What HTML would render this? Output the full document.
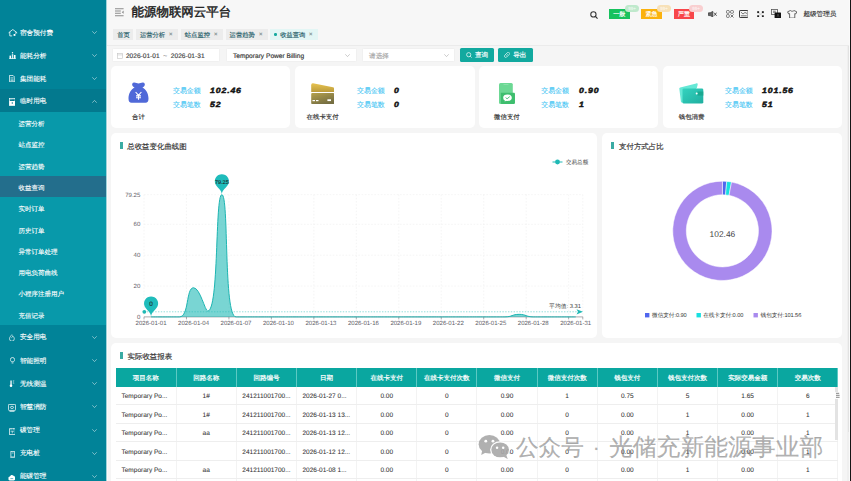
<!DOCTYPE html>
<html><head><meta charset="utf-8">
<style>
*{box-sizing:border-box;margin:0;padding:0}
html,body{width:851px;height:481px;overflow:hidden;background:#f5f5f5;font-family:"Liberation Sans",sans-serif;position:relative;-webkit-text-stroke-width:0.16px;text-rendering:geometricPrecision}
.abs{position:absolute}
#side{position:absolute;left:0;top:0;width:106px;height:481px;background:#018398}
.mi{position:absolute;left:0;width:106px;height:23px;color:#fff;font-weight:500;-webkit-text-stroke-width:0.13px;font-size:6.6px;line-height:24px}
.mi .t{position:absolute;left:20px;top:0.9px}
.mi .ic{position:absolute;left:8.5px;top:7.5px;width:9px;height:9px}
.mi .ch{position:absolute;left:92px;top:10.5px;width:5px;height:3px}
.si{position:absolute;left:0;width:106px;height:21.3px;color:#fff;font-weight:500;-webkit-text-stroke-width:0.12px;font-size:6.5px;line-height:25.8px;padding-left:18.6px}
#hdr{position:absolute;left:107px;top:0;width:744px;height:46px;background:#f7f7f7}
.tab{position:absolute;top:28.7px;height:11.8px;background:#ececec;color:#28606a;font-size:6.3px;font-weight:500;line-height:13.7px;padding-left:4px}
.tab .x{position:absolute;right:5.5px;top:0;font-size:6px;color:#6a7a7e}
.card{position:absolute;background:#fff;border-radius:5px}
.lbl{position:absolute;color:#46c6f4;-webkit-text-stroke-width:0.1px;font-size:6.9px;font-weight:500;margin-top:1.1px}
.num{position:absolute;color:#111;font-size:7.5px;font-weight:bold;font-style:italic;letter-spacing:0.75px;transform:scaleX(1.16);transform-origin:0 0;-webkit-text-stroke:0.45px #111}
.cap{position:absolute;color:#333;font-size:6.4px;font-weight:500;text-align:center;width:40px}
.ttl{position:absolute;font-size:7.45px;font-weight:500;color:#333}
.bar{position:absolute;width:2.5px;height:7.3px;background:#3aaba3}
table{border-collapse:collapse;table-layout:fixed;position:absolute;left:116px;top:368px;width:722px}
th{background:#0aa7a0;color:#fff;font-size:6.5px;-webkit-text-stroke-width:0.2px;font-weight:500;height:18.5px;border-right:0.6px solid #5cc9c3;text-align:center;padding:2.4px 0 0 0;vertical-align:middle}
td{height:18.4px;-webkit-text-stroke-width:0.06px;font-size:6.5px;color:#333;text-align:center;border-bottom:0.6px solid #eeeeee;border-right:0.6px solid #f3f3f3;padding:2.3px 0 0 0;white-space:nowrap}
td.l{text-align:left;padding-left:5.5px}
.btn{position:absolute;top:48px;height:14.2px;background:#12a99f;color:#fff;font-size:6.6px;line-height:16.4px;border-radius:1.5px;-webkit-text-stroke-width:0.15px;padding-top:0}
.inp{position:absolute;top:48px;height:14px;background:#fff;border:0.5px solid #f0f0f0;border-radius:1.5px;font-size:6.6px;line-height:15.2px;color:#444}
</style></head><body>

<div id="side">
  <div class="mi" style="top:20.8px"><span class="t">宿舍预付费</span><svg class="ch" viewBox="0 0 5 3"><path d="M0.3 0.3 L2.5 2.6 L4.7 0.3" fill="none" stroke="#cfe6ea" stroke-width="0.6"/></svg></div>
  <div class="mi" style="top:43.9px"><span class="t">能耗分析</span><svg class="ch" viewBox="0 0 5 3"><path d="M0.3 0.3 L2.5 2.6 L4.7 0.3" fill="none" stroke="#cfe6ea" stroke-width="0.6"/></svg></div>
  <div class="mi" style="top:66.9px"><span class="t">集团能耗</span><svg class="ch" viewBox="0 0 5 3"><path d="M0.3 0.3 L2.5 2.6 L4.7 0.3" fill="none" stroke="#cfe6ea" stroke-width="0.6"/></svg></div>
  <div class="mi" style="top:89.3px;background:#03798e;height:22.7px"><span class="t">临时用电</span><svg class="ch" viewBox="0 0 5 3"><path d="M0.3 2.7 L2.5 0.4 L4.7 2.7" fill="none" stroke="#cfe6ea" stroke-width="0.6"/></svg></div>
  <div class="abs" style="left:0;top:112px;width:106px;height:213px;background:#0899aa"></div>
  <div class="si" style="top:112px">运营分析</div>
  <div class="si" style="top:133.3px">站点监控</div>
  <div class="si" style="top:154.6px">运营趋势</div>
  <div class="si" style="top:175.9px;background:#236e8c">收益查询</div>
  <div class="si" style="top:197.2px">实时订单</div>
  <div class="si" style="top:218.5px">历史订单</div>
  <div class="si" style="top:239.8px">异常订单处理</div>
  <div class="si" style="top:261.1px">用电负荷曲线</div>
  <div class="si" style="top:282.4px">小程序注册用户</div>
  <div class="si" style="top:303.7px">充值记录</div>
  <div class="mi" style="top:325.6px"><span class="t">安全用电</span><svg class="ch" viewBox="0 0 5 3"><path d="M0.3 0.3 L2.5 2.6 L4.7 0.3" fill="none" stroke="#cfe6ea" stroke-width="0.6"/></svg></div>
  <div class="mi" style="top:348.7px"><span class="t">智能照明</span><svg class="ch" viewBox="0 0 5 3"><path d="M0.3 0.3 L2.5 2.6 L4.7 0.3" fill="none" stroke="#cfe6ea" stroke-width="0.6"/></svg></div>
  <div class="mi" style="top:371.8px"><span class="t">无线测温</span><svg class="ch" viewBox="0 0 5 3"><path d="M0.3 0.3 L2.5 2.6 L4.7 0.3" fill="none" stroke="#cfe6ea" stroke-width="0.6"/></svg></div>
  <div class="mi" style="top:394.9px"><span class="t">智慧消防</span><svg class="ch" viewBox="0 0 5 3"><path d="M0.3 0.3 L2.5 2.6 L4.7 0.3" fill="none" stroke="#cfe6ea" stroke-width="0.6"/></svg></div>
  <div class="mi" style="top:418px"><span class="t">碳管理</span><svg class="ch" viewBox="0 0 5 3"><path d="M0.3 0.3 L2.5 2.6 L4.7 0.3" fill="none" stroke="#cfe6ea" stroke-width="0.6"/></svg></div>
  <div class="mi" style="top:441.1px"><span class="t">充电桩</span><svg class="ch" viewBox="0 0 5 3"><path d="M0.3 0.3 L2.5 2.6 L4.7 0.3" fill="none" stroke="#cfe6ea" stroke-width="0.6"/></svg></div>
  <div class="mi" style="top:464.2px"><span class="t">能碳管理</span><svg class="ch" viewBox="0 0 5 3"><path d="M0.3 0.3 L2.5 2.6 L4.7 0.3" fill="none" stroke="#cfe6ea" stroke-width="0.6"/></svg></div>
</div>
<!--SIDEICONS-->
<svg class="abs" style="left:8px;top:29px" width="10" height="7.5" viewBox="0 0 10 7.5"><path d="M0.6 3.8 L4.8 0.5 L9.2 3.8 M1.8 3 V6.9 H4.2 M7.9 3 V5" fill="none" stroke="#fff" stroke-width="0.8"/><rect x="5.6" y="5" width="1.8" height="1.9" fill="#fff"/></svg>
<svg class="abs" style="left:8.7px;top:52px" width="7" height="7" viewBox="0 0 7 7"><path d="M0.2 6.6 H6.8" stroke="#fff" stroke-width="0.8"/><rect x="0.5" y="3.6" width="1.5" height="3" fill="#fff"/><rect x="2.8" y="2.2" width="1.5" height="4.4" fill="#fff" fill-opacity="0.85"/><rect x="5" y="3" width="1.5" height="3.6" fill="#fff"/><circle cx="3.5" cy="0.8" r="0.7" fill="#fff"/></svg>
<svg class="abs" style="left:9px;top:75px" width="6.2" height="7.2" viewBox="0 0 6.2 7.2"><path d="M0.4 0.4 H4 L5.8 2.2 V6.8 H0.4 Z" fill="none" stroke="#fff" stroke-width="0.8"/><path d="M1.5 2.8 H4.7 M1.5 4.2 H4.7 M1.5 5.6 H4.7" stroke="#fff" stroke-width="0.6"/></svg>
<svg class="abs" style="left:9px;top:97.8px" width="6.4" height="7.8" viewBox="0 0 6.4 7.8"><rect x="0.35" y="0.35" width="5.7" height="7.1" fill="none" stroke="#fff" stroke-width="0.7"/><path d="M1.3 1.6 H5.1" stroke="#fff" stroke-width="0.6" stroke-dasharray="0.6 0.6"/><rect x="0.35" y="3" width="5.7" height="4.45" fill="#fff"/><circle cx="3.3" cy="5" r="0.7" fill="#03798e"/></svg>
<svg class="abs" style="left:9.4px;top:333.6px" width="5.8" height="7.5" viewBox="0 0 5.8 7.5"><path d="M2.9 0.5 C2 2 0.5 3 0.5 4.8 A2.4 2.4 0 0 0 5.3 4.8 C5.3 3.3 4.2 2.4 3.6 1.8 C3.6 3 3.2 3.4 2.6 3.6" fill="none" stroke="#fff" stroke-width="0.7"/></svg>
<svg class="abs" style="left:9.6px;top:357.3px" width="5" height="6.5" viewBox="0 0 5 6.5"><path d="M1.5 4.8 C0.8 4.2 0.4 3.4 0.4 2.6 A2.1 2.1 0 0 1 4.6 2.6 C4.6 3.4 4.2 4.2 3.5 4.8 Z" fill="none" stroke="#fff" stroke-width="0.75"/><path d="M1.6 6 H3.4" stroke="#fff" stroke-width="0.7"/></svg>
<svg class="abs" style="left:9.3px;top:380.4px" width="6" height="7.2" viewBox="0 0 6 7.2"><rect x="1.4" y="0.5" width="1.3" height="4.5" fill="#fff"/><circle cx="2" cy="5.7" r="1.3" fill="#fff"/><path d="M3.8 0.8 H5.3 M3.8 2 H5 M3.8 3.2 H5.3" stroke="#fff" stroke-width="0.5"/></svg>
<svg class="abs" style="left:8.2px;top:404px" width="8" height="8" viewBox="0 0 8 8"><rect x="0.4" y="0.4" width="7.2" height="6" rx="0.8" fill="none" stroke="#fff" stroke-width="0.8"/><ellipse cx="4" cy="3.4" rx="1.6" ry="1.1" fill="none" stroke="#fff" stroke-width="0.7"/><path d="M1.5 7.6 H6.5" stroke="#fff" stroke-width="0.7"/></svg>
<svg class="abs" style="left:8.9px;top:427.8px" width="6.6" height="6.8" viewBox="0 0 6.6 6.8"><rect x="0.4" y="0.8" width="5.8" height="5.6" fill="none" stroke="#fff" stroke-width="0.7"/><path d="M2 0.2 V1.5 M4.6 0.2 V1.5 M1.6 3.2 H5 M3.3 3.2 V5.4" stroke="#fff" stroke-width="0.6"/></svg>
<svg class="abs" style="left:9.5px;top:450.7px" width="5.4" height="7.2" viewBox="0 0 5.4 7.2"><rect x="0.9" y="0.4" width="3.6" height="5.6" fill="none" stroke="#fff" stroke-width="0.7"/><path d="M1.8 2 H3.6 M0.2 6.8 H5.2" stroke="#fff" stroke-width="0.6"/></svg>
<svg class="abs" style="left:8.2px;top:474px" width="7.6" height="7" viewBox="0 0 7.6 7"><path d="M1.8 6.6 C0.6 6.6 0.2 5.6 0.5 4.6 C0.2 3.4 1 2.4 2 2.6 C2.5 1 4.4 0.6 5.4 1.8 C6.8 2 7.4 3.4 7 4.6 C7.4 5.8 6.6 6.6 5.6 6.6 Z" fill="#fff"/><path d="M2.4 4.6 H5.2" stroke="#018398" stroke-width="0.6"/></svg>
<!--/SIDEICONS-->
<div class="abs" style="left:106px;top:0;width:1px;height:481px;background:#9fd3da"></div><div class="abs" style="left:107px;top:0;width:1px;height:481px;background:#fcf9f9"></div>

<!-- header -->
<div id="hdr"></div>
<div class="abs" style="left:107px;top:45px;width:744px;height:0.8px;background:#ebebeb"></div>
<svg class="abs" style="left:114.5px;top:8.3px" width="9" height="8.5" viewBox="0 0 9 8.5"><path d="M0 0.7 H8.6 M0 3 H5.8 M0 5.3 H5.8 M0 7.7 H8.6" stroke="#8c8c8c" stroke-width="1.1"/><path d="M8.6 2.6 L6.8 4.15 L8.6 5.7 Z" fill="#8c8c8c"/></svg>
<div class="abs" style="left:131.6px;top:4.2px;font-size:12.45px;font-weight:normal;color:#1e1e1e;line-height:16px;-webkit-text-stroke-width:0.45px">能源物联网云平台</div>

<!-- header right -->
<svg class="abs" style="left:589.5px;top:10.5px" width="8.5" height="8" viewBox="0 0 9 8.5"><circle cx="3.6" cy="3.6" r="2.8" fill="none" stroke="#333" stroke-width="1.1"/><path d="M5.6 5.6 L8 8" stroke="#333" stroke-width="1.2"/></svg>
<div class="abs" style="left:609px;top:8.7px;width:20.6px;height:10px;background:#17c25e;color:#fff;font-size:6px;line-height:12.2px;text-align:center">一般</div>
<div class="abs" style="left:625px;top:5.4px;width:14px;height:7px;background:#bfe9cc;border-radius:3.5px;color:rgba(255,255,255,0.55);font-size:4.5px;line-height:8.5px;text-align:center">99+</div>
<div class="abs" style="left:641px;top:8.7px;width:20.8px;height:10px;background:#fbb20e;color:#fff;font-size:6px;line-height:12.2px;text-align:center">紧急</div>
<div class="abs" style="left:657px;top:5.4px;width:14px;height:7px;background:#f7e1b8;border-radius:3.5px;color:rgba(255,255,255,0.55);font-size:4.5px;line-height:8.5px;text-align:center">99+</div>
<div class="abs" style="left:673.8px;top:8.7px;width:20.2px;height:10px;background:#f8464a;color:#fff;font-size:6px;line-height:12.2px;text-align:center">严重</div>
<div class="abs" style="left:689px;top:5.4px;width:14px;height:7px;background:#f9cfd0;border-radius:3.5px;color:rgba(255,255,255,0.55);font-size:4.5px;line-height:8.5px;text-align:center">99+</div>

<svg class="abs" style="left:707.6px;top:10.6px" width="9" height="6.4" viewBox="0 0 9 6.4"><path d="M0.5 1.8 H2.2 L4.8 0.4 V6 L2.2 4.6 H0.5 Z" fill="#666" stroke="#333" stroke-width="0.7" stroke-linejoin="round"/><path d="M6 1.6 L8.6 4.8 M8.6 1.6 L6 4.8" stroke="#333" stroke-width="0.8"/></svg>
<svg class="abs" style="left:725.8px;top:9.8px" width="8" height="8" viewBox="0 0 8 8"><rect x="0.5" y="0.5" width="2.8" height="2.8" rx="0.9" fill="none" stroke="#555" stroke-width="0.8"/><rect x="4.6" y="0.5" width="2.8" height="2.8" rx="0.9" fill="none" stroke="#555" stroke-width="0.8"/><rect x="0.5" y="4.6" width="2.8" height="2.8" rx="0.9" fill="none" stroke="#555" stroke-width="0.8"/><path d="M4.5 4.5 L7.5 7.5 M7.5 4.5 L4.5 7.5" stroke="#555" stroke-width="0.8"/></svg>
<svg class="abs" style="left:738.8px;top:9.8px" width="9.6" height="8" viewBox="0 0 9.6 8"><rect x="0.5" y="0.5" width="8.6" height="7" rx="0.6" fill="none" stroke="#3a3a3a" stroke-width="1"/><path d="M1.8 2 L4 4 L6 2.5 L8 3.5 M1.8 5.8 H7.8" fill="none" stroke="#555" stroke-width="0.8"/></svg>
<svg class="abs" style="left:756.5px;top:10.7px" width="7" height="6.4" viewBox="0 0 7 6.4"><rect x="0.2" y="0.2" width="1.9" height="1.9" fill="#222"/><rect x="4.9" y="0.2" width="1.9" height="1.9" fill="#222"/><rect x="0.2" y="4.3" width="1.9" height="1.9" fill="#222"/><rect x="4.9" y="4.3" width="1.9" height="1.9" fill="#222"/><path d="M2 2 L5 4.4 M5 2 L2 4.4" stroke="#aaa" stroke-width="0.4"/></svg>
<svg class="abs" style="left:771px;top:9px" width="10.4" height="9.4" viewBox="0 0 10.4 9.4"><rect x="0.4" y="0.4" width="6" height="5.2" fill="#f7f7f7" stroke="#555" stroke-width="0.8"/><rect x="2" y="1.6" width="2.8" height="2.4" fill="#999"/><rect x="3.6" y="3.6" width="6.4" height="5.6" rx="0.5" fill="#111"/><path d="M6 8 L7 5 L8 8" fill="none" stroke="#666" stroke-width="0.5"/></svg>
<svg class="abs" style="left:787px;top:9.6px" width="10.4" height="8.6" viewBox="0 0 10.4 8.6"><path d="M3.4 0.5 L0.6 1.8 L1.6 4 L2.6 3.6 V8.1 H7.8 V3.6 L8.8 4 L9.8 1.8 L7 0.5 C6.3 1.5 4.1 1.5 3.4 0.5 Z" fill="none" stroke="#444" stroke-width="0.8" stroke-linejoin="round"/></svg>
<div class="abs" style="left:803.4px;top:11px;font-size:6.6px;color:#333;font-weight:500;line-height:8px">超级管理员</div>
<div class="abs" style="left:846.5px;top:45.5px;width:3px;height:436px;background:#efefef"></div><div class="abs" style="left:847.6px;top:45.5px;width:1.6px;height:386px;background:#e2e2e2"></div><div class="abs" style="left:849px;top:0;width:1px;height:481px;background:#fafafa"></div><div class="abs" style="left:850px;top:0;width:1px;height:481px;background:#151515"></div>

<!-- tabs -->
<div class="tab" style="left:113.3px;width:20.2px">首页</div>
<div class="tab" style="left:135.9px;width:42.1px">运营分析<span class="x">×</span></div>
<div class="tab" style="left:180.8px;width:42.2px">站点监控<span class="x">×</span></div>
<div class="tab" style="left:225.6px;width:42.4px">运营趋势<span class="x">×</span></div>
<div class="tab" style="left:270.4px;width:47.6px;background:#e3f6f5;padding-left:9.8px">收益查询<span class="x">×</span><span class="abs" style="left:3.8px;top:4.8px;width:2.4px;height:2.4px;border-radius:50%;background:#17aaa0"></span></div>

<!-- filter -->
<div class="inp" style="left:111.6px;width:108.6px"><svg class="abs" style="left:4px;top:3.5px" width="6" height="6" viewBox="0 0 6 6"><rect x="0.4" y="0.6" width="5.2" height="5" fill="none" stroke="#c4c4c4" stroke-width="0.6"/><path d="M0.4 1.9 H5.6" stroke="#c4c4c4" stroke-width="0.6"/></svg><span class="abs" style="left:13.3px;top:0">2026-01-01 &nbsp;<span style="color:#888">~</span>&nbsp; 2026-01-31</span></div>
<div class="inp" style="left:226px;width:130.7px"><span class="abs" style="left:6px;top:0;color:#333">Temporary Power Billing</span><svg class="abs" style="left:118px;top:4.6px" width="5" height="3" viewBox="0 0 5 3"><path d="M0.3 0.3 L2.5 2.6 L4.7 0.3" fill="none" stroke="#aaa" stroke-width="0.6"/></svg></div>
<div class="inp" style="left:361.6px;width:93.4px;color:#aaa"><span class="abs" style="left:6.5px;top:0">请选择</span><svg class="abs" style="left:81px;top:4.6px" width="5" height="3" viewBox="0 0 5 3"><path d="M0.3 0.3 L2.5 2.6 L4.7 0.3" fill="none" stroke="#aaa" stroke-width="0.6"/></svg></div>
<div class="btn" style="left:460px;width:34px"><svg class="abs" style="left:6px;top:4px" width="6" height="6" viewBox="0 0 6 6"><circle cx="2.7" cy="2.7" r="2.1" fill="none" stroke="#fff" stroke-width="0.7"/><path d="M4.2 4.2 L5.6 5.6" stroke="#fff" stroke-width="0.7"/></svg><span class="abs" style="left:15px;top:0">查询</span></div>
<div class="btn" style="left:498px;width:34.5px"><svg class="abs" style="left:6.2px;top:4.3px" width="6" height="6" viewBox="0 0 6 6"><rect x="1.6" y="-0.2" width="2.6" height="6.2" rx="1.3" transform="rotate(45 3 3)" fill="none" stroke="#e8f6f5" stroke-width="0.7"/><path d="M2.3 3.7 L3.8 2.2" stroke="#e8f6f5" stroke-width="0.6"/></svg><span class="abs" style="left:15.2px;top:0">导出</span></div>

<!-- stat cards -->
<div class="card" style="left:110.7px;top:66.2px;width:179.3px;height:62.2px"></div>
<div class="card" style="left:295px;top:66.2px;width:179.5px;height:62.2px"></div>
<div class="card" style="left:479.1px;top:66.2px;width:179.4px;height:62.2px"></div>
<div class="card" style="left:663.3px;top:66.2px;width:179.2px;height:62.2px"></div>


<!-- card contents -->
<svg class="abs" style="left:128px;top:82.3px" width="21" height="21.2" viewBox="0 0 21 21.2"><path d="M6.2 0.6 C4.2 0.6 3.6 2.6 4.6 4 C5.2 4.8 6 5.2 6.6 5.6 C3 7.4 0.5 11.5 0.5 16.6 C0.5 19.5 1.5 20.8 3.5 20.8 H17.5 C19.5 20.8 20.5 19.5 20.5 16.6 C20.5 11.5 18 7.4 14.4 5.6 C15 5.2 15.8 4.8 16.4 4 C17.4 2.6 16.8 0.6 14.8 0.6 C13 0.6 12 1.6 10.5 1.6 C9 1.6 8 0.6 6.2 0.6 Z" fill="#5069d8"/><path d="M7.6 10 L10.5 13.4 L13.4 10 M10.5 13.4 V17.8 M8 13.9 H13 M8 15.7 H13" fill="none" stroke="#fff" stroke-width="1.1"/></svg>
<div class="cap" style="left:118.4px;top:113.2px">合计</div>
<svg class="abs" style="left:310.9px;top:82.8px" width="23.4" height="21.3" viewBox="0 0 23.4 21.3"><defs><linearGradient id="g1" x1="0" y1="0" x2="0" y2="1"><stop offset="0" stop-color="#e8c350"/><stop offset="1" stop-color="#bc9c3c"/></linearGradient><linearGradient id="g2" x1="0" y1="0" x2="0.6" y2="1"><stop offset="0" stop-color="#b5a14c"/><stop offset="1" stop-color="#756e42"/></linearGradient></defs><path d="M2 0.2 L22 4.3 C22.8 4.5 23.2 5.1 23.2 5.9 V8.9 H0.2 V2.2 C0.2 0.9 0.9 0 2 0.2 Z" fill="url(#g1)"/><rect x="0.2" y="9.9" width="23" height="11.2" rx="1" fill="url(#g2)"/><rect x="1.5" y="17" width="2.5" height="1.2" fill="#fff"/><rect x="5" y="17" width="2.5" height="1.2" fill="#fff"/><rect x="16.4" y="16.3" width="3.6" height="1.8" fill="#fff"/></svg>
<div class="cap" style="left:302.6px;top:113.2px">在线卡支付</div>
<svg class="abs" style="left:499px;top:82.5px" width="16.2" height="21.2" viewBox="0 0 16.2 21.2"><rect x="0" y="0" width="13.8" height="21" rx="1.5" fill="#6cd894"/><rect x="4.5" y="1.4" width="5" height="0.6" fill="#9fe8b9"/><path d="M1.8 9.8 H14.6 C15.5 9.8 16 10.3 16 11.2 V19.8 C16 20.6 15.5 21.1 14.6 21.1 H3 C2.2 21.1 1.8 20.6 1.8 19.8 Z" fill="#3ebe6e"/><ellipse cx="8.5" cy="14.7" rx="4.3" ry="3.3" fill="#fff"/><path d="M5.6 18.6 L6.4 16.8 L8 17.6 Z" fill="#fff"/><path d="M6.6 14.6 L8.1 15.8 L10.8 13.6" fill="none" stroke="#3ebe6e" stroke-width="0.9"/></svg>
<div class="cap" style="left:486.9px;top:113.2px">微信支付</div>
<svg class="abs" style="left:679.4px;top:83.3px" width="24.4" height="20.8" viewBox="0 0 24.4 20.8"><defs><linearGradient id="g4" x1="0" y1="0" x2="1" y2="1"><stop offset="0" stop-color="#34d3bf"/><stop offset="1" stop-color="#1fae9f"/></linearGradient></defs><path d="M1.2 4.4 L17.2 0.4 C18.4 0.1 19 0.9 18.6 1.9 L17.8 5 L3.2 19.8 C2.4 19.8 2 19.4 1.9 18.6 L0.3 5.6 C0.2 5 0.6 4.6 1.2 4.4 Z" fill="#66e8d6"/><rect x="3.5" y="5.4" width="20.8" height="15.2" rx="1.4" fill="url(#g4)"/><path d="M18.4 8.5 H24.3 V12.6 H18.4 Z" fill="#1aa890"/><circle cx="17.7" cy="10.5" r="1" fill="#fff"/></svg>
<div class="cap" style="left:671.6px;top:113.2px">钱包消费</div>

<div class="lbl" style="left:173px;top:86.2px">交易金额</div>
<div class="lbl" style="left:173px;top:100px">交易笔数</div>
<div class="num" style="left:210.2px;top:85.6px">102.46</div>
<div class="num" style="left:210.2px;top:99.5px">52</div>
<div class="lbl" style="left:357.1px;top:86.2px">交易金额</div>
<div class="lbl" style="left:357.1px;top:100px">交易笔数</div>
<div class="num" style="left:394.2px;top:85.6px">0</div>
<div class="num" style="left:394.2px;top:99.5px">0</div>
<div class="lbl" style="left:541.3px;top:86.2px">交易金额</div>
<div class="lbl" style="left:541.3px;top:100px">交易笔数</div>
<div class="num" style="left:579px;top:85.6px">0.90</div>
<div class="num" style="left:579px;top:99.5px">1</div>
<div class="lbl" style="left:725.1px;top:86.2px">交易金额</div>
<div class="lbl" style="left:725.1px;top:100px">交易笔数</div>
<div class="num" style="left:762.3px;top:85.6px">101.56</div>
<div class="num" style="left:762.3px;top:99.5px">51</div>

<!-- chart cards -->
<div class="card" style="left:110.7px;top:133.4px;width:486.5px;height:204.6px"></div>
<div class="card" style="left:601.7px;top:133.4px;width:240.7px;height:204.6px"></div>
<div class="bar" style="left:120.1px;top:142.1px"></div>
<div class="ttl" style="left:127.2px;top:141.8px">总收益变化曲线图</div>
<div class="bar" style="left:611.1px;top:141.9px"></div>
<div class="ttl" style="left:619px;top:141.6px">支付方式占比</div>

<!--CHART--><svg class="abs" style="left:110px;top:150px;-webkit-text-stroke-width:0.05px" width="490" height="190" viewBox="110 150 490 190" font-family="Liberation Sans, sans-serif"><line x1="144" y1="286.05" x2="582.8" y2="286.05" stroke="#eeeeee" stroke-width="0.6" stroke-dasharray="1.6 1.6"/><line x1="144" y1="255.20" x2="582.8" y2="255.20" stroke="#eeeeee" stroke-width="0.6" stroke-dasharray="1.6 1.6"/><line x1="144" y1="224.34" x2="582.8" y2="224.34" stroke="#eeeeee" stroke-width="0.6" stroke-dasharray="1.6 1.6"/><line x1="144" y1="194.65" x2="582.8" y2="194.65" stroke="#eeeeee" stroke-width="0.6" stroke-dasharray="1.6 1.6"/><line x1="144.00" y1="194.6" x2="144.00" y2="316.9" stroke="#eeeeee" stroke-width="0.6" stroke-dasharray="1.6 1.6"/><line x1="186.46" y1="194.6" x2="186.46" y2="316.9" stroke="#eeeeee" stroke-width="0.6" stroke-dasharray="1.6 1.6"/><line x1="228.93" y1="194.6" x2="228.93" y2="316.9" stroke="#eeeeee" stroke-width="0.6" stroke-dasharray="1.6 1.6"/><line x1="271.39" y1="194.6" x2="271.39" y2="316.9" stroke="#eeeeee" stroke-width="0.6" stroke-dasharray="1.6 1.6"/><line x1="313.86" y1="194.6" x2="313.86" y2="316.9" stroke="#eeeeee" stroke-width="0.6" stroke-dasharray="1.6 1.6"/><line x1="356.32" y1="194.6" x2="356.32" y2="316.9" stroke="#eeeeee" stroke-width="0.6" stroke-dasharray="1.6 1.6"/><line x1="398.79" y1="194.6" x2="398.79" y2="316.9" stroke="#eeeeee" stroke-width="0.6" stroke-dasharray="1.6 1.6"/><line x1="441.25" y1="194.6" x2="441.25" y2="316.9" stroke="#eeeeee" stroke-width="0.6" stroke-dasharray="1.6 1.6"/><line x1="483.72" y1="194.6" x2="483.72" y2="316.9" stroke="#eeeeee" stroke-width="0.6" stroke-dasharray="1.6 1.6"/><line x1="526.18" y1="194.6" x2="526.18" y2="316.9" stroke="#eeeeee" stroke-width="0.6" stroke-dasharray="1.6 1.6"/><line x1="568.65" y1="194.6" x2="568.65" y2="316.9" stroke="#eeeeee" stroke-width="0.6" stroke-dasharray="1.6 1.6"/><line x1="582.8" y1="194.6" x2="582.8" y2="316.9" stroke="#eeeeee" stroke-width="0.6" stroke-dasharray="1.6 1.6"/><line x1="144" y1="316.9" x2="582.8" y2="316.9" stroke="#6e7079" stroke-width="0.6"/><line x1="144.00" y1="316.9" x2="144.00" y2="319.4" stroke="#6e7079" stroke-width="0.6"/><line x1="186.46" y1="316.9" x2="186.46" y2="319.4" stroke="#6e7079" stroke-width="0.6"/><line x1="228.93" y1="316.9" x2="228.93" y2="319.4" stroke="#6e7079" stroke-width="0.6"/><line x1="271.39" y1="316.9" x2="271.39" y2="319.4" stroke="#6e7079" stroke-width="0.6"/><line x1="313.86" y1="316.9" x2="313.86" y2="319.4" stroke="#6e7079" stroke-width="0.6"/><line x1="356.32" y1="316.9" x2="356.32" y2="319.4" stroke="#6e7079" stroke-width="0.6"/><line x1="398.79" y1="316.9" x2="398.79" y2="319.4" stroke="#6e7079" stroke-width="0.6"/><line x1="441.25" y1="316.9" x2="441.25" y2="319.4" stroke="#6e7079" stroke-width="0.6"/><line x1="483.72" y1="316.9" x2="483.72" y2="319.4" stroke="#6e7079" stroke-width="0.6"/><line x1="526.18" y1="316.9" x2="526.18" y2="319.4" stroke="#6e7079" stroke-width="0.6"/><line x1="568.65" y1="316.9" x2="568.65" y2="319.4" stroke="#6e7079" stroke-width="0.6"/><line x1="582.8" y1="316.9" x2="582.8" y2="319.4" stroke="#6e7079" stroke-width="0.6"/><text x="140.4" y="319.00" text-anchor="end" font-size="6.1" fill="#5f6168">0</text><text x="140.4" y="288.15" text-anchor="end" font-size="6.1" fill="#5f6168">20</text><text x="140.4" y="257.30" text-anchor="end" font-size="6.1" fill="#5f6168">40</text><text x="140.4" y="226.44" text-anchor="end" font-size="6.1" fill="#5f6168">60</text><text x="140.4" y="196.75" text-anchor="end" font-size="6.1" fill="#5f6168">79.25</text><text x="151.08" y="325.20" text-anchor="middle" font-size="6.05" fill="#5f6168">2026-01-01</text><text x="193.54" y="325.20" text-anchor="middle" font-size="6.05" fill="#5f6168">2026-01-04</text><text x="236.01" y="325.20" text-anchor="middle" font-size="6.05" fill="#5f6168">2026-01-07</text><text x="278.47" y="325.20" text-anchor="middle" font-size="6.05" fill="#5f6168">2026-01-10</text><text x="320.94" y="325.20" text-anchor="middle" font-size="6.05" fill="#5f6168">2026-01-13</text><text x="363.40" y="325.20" text-anchor="middle" font-size="6.05" fill="#5f6168">2026-01-16</text><text x="405.86" y="325.20" text-anchor="middle" font-size="6.05" fill="#5f6168">2026-01-19</text><text x="448.33" y="325.20" text-anchor="middle" font-size="6.05" fill="#5f6168">2026-01-22</text><text x="490.79" y="325.20" text-anchor="middle" font-size="6.05" fill="#5f6168">2026-01-25</text><text x="533.26" y="325.20" text-anchor="middle" font-size="6.05" fill="#5f6168">2026-01-28</text><text x="575.72" y="325.20" text-anchor="middle" font-size="6.05" fill="#5f6168">2026-01-31</text><path d="M151.08 316.90 C151.08 316.90 158.15 316.90 165.23 316.90 C172.31 316.90 175.08 316.90 179.39 316.90 C189.24 316.90 185.85 287.74 193.54 287.74 C200.01 287.74 205.03 311.04 207.70 311.04 C219.18 311.04 214.95 194.65 221.85 194.65 C229.10 194.65 223.31 316.90 236.01 316.90 C237.47 316.90 243.08 316.90 250.16 316.90 C257.24 316.90 257.24 316.90 264.32 316.90 C271.39 316.90 271.39 316.90 278.47 316.90 C285.55 316.90 285.55 316.90 292.63 316.90 C299.70 316.90 299.70 316.90 306.78 316.90 C313.86 316.90 313.86 316.90 320.94 316.90 C328.01 316.90 328.01 316.90 335.09 316.90 C342.17 316.90 342.17 316.90 349.25 316.90 C356.32 316.90 356.32 316.90 363.40 316.90 C370.48 316.90 370.48 316.90 377.55 316.90 C384.63 316.90 384.63 316.90 391.71 316.90 C398.79 316.90 398.79 316.90 405.86 316.90 C412.94 316.90 412.94 316.90 420.02 316.90 C427.10 316.90 427.10 316.90 434.17 316.90 C441.25 316.90 441.25 316.90 448.33 316.90 C455.41 316.90 455.41 316.90 462.48 316.90 C469.56 316.90 469.56 316.90 476.64 316.90 C483.72 316.90 483.72 316.90 490.79 316.90 C497.87 316.90 497.93 316.90 504.95 316.90 C512.08 316.90 512.03 314.35 519.10 314.35 C526.18 314.35 526.12 316.90 533.26 316.90 C540.28 316.90 540.34 316.90 547.41 316.90 C554.49 316.90 554.49 316.90 561.57 316.90 C568.65 316.90 575.72 316.90 575.72 316.90 L575.72 316.9 L151.08 316.9 Z" fill="#1fb9b5" fill-opacity="0.6"/><path d="M151.08 316.90 C151.08 316.90 158.15 316.90 165.23 316.90 C172.31 316.90 175.08 316.90 179.39 316.90 C189.24 316.90 185.85 287.74 193.54 287.74 C200.01 287.74 205.03 311.04 207.70 311.04 C219.18 311.04 214.95 194.65 221.85 194.65 C229.10 194.65 223.31 316.90 236.01 316.90 C237.47 316.90 243.08 316.90 250.16 316.90 C257.24 316.90 257.24 316.90 264.32 316.90 C271.39 316.90 271.39 316.90 278.47 316.90 C285.55 316.90 285.55 316.90 292.63 316.90 C299.70 316.90 299.70 316.90 306.78 316.90 C313.86 316.90 313.86 316.90 320.94 316.90 C328.01 316.90 328.01 316.90 335.09 316.90 C342.17 316.90 342.17 316.90 349.25 316.90 C356.32 316.90 356.32 316.90 363.40 316.90 C370.48 316.90 370.48 316.90 377.55 316.90 C384.63 316.90 384.63 316.90 391.71 316.90 C398.79 316.90 398.79 316.90 405.86 316.90 C412.94 316.90 412.94 316.90 420.02 316.90 C427.10 316.90 427.10 316.90 434.17 316.90 C441.25 316.90 441.25 316.90 448.33 316.90 C455.41 316.90 455.41 316.90 462.48 316.90 C469.56 316.90 469.56 316.90 476.64 316.90 C483.72 316.90 483.72 316.90 490.79 316.90 C497.87 316.90 497.93 316.90 504.95 316.90 C512.08 316.90 512.03 314.35 519.10 314.35 C526.18 314.35 526.12 316.90 533.26 316.90 C540.28 316.90 540.34 316.90 547.41 316.90 C554.49 316.90 554.49 316.90 561.57 316.90 C568.65 316.90 575.72 316.90 575.72 316.90" fill="none" stroke="#1db5b2" stroke-width="1"/><line x1="144" y1="311.79" x2="579" y2="311.79" stroke="#1fb9b5" stroke-opacity="0.8" stroke-width="0.6" stroke-dasharray="1.4 1.4"/><circle cx="144.3" cy="311.79" r="1.9" fill="#1fb9b5"/><path d="M576.5 309.19 L583 311.79 L576.5 314.39 L578 311.79 Z" fill="#1fb9b5"/><text x="581" y="308.39" text-anchor="end" font-size="5.8" fill="#444">平均值: 3.31</text><path d="M215.48 184.24 A7.05 7.05 0 1 1 228.22 184.24 C226.41 188.06 221.85 189.71 221.85 194.65 C221.85 189.71 217.29 188.06 215.48 184.24 Z" fill="#1fbcbb"/><text x="221.85" y="184.12" text-anchor="middle" font-size="5.5" fill="#1a2e2e" stroke="#1a2e2e" stroke-width="0.12">79.25</text><path d="M144.71 306.49 A7.05 7.05 0 1 1 157.45 306.49 C155.63 310.31 151.08 311.96 151.08 316.90 C151.08 311.96 146.52 310.31 144.71 306.49 Z" fill="#1fbcbb"/><text x="151.08" y="306.37" text-anchor="middle" font-size="6.4" fill="#1a2e2e" stroke="#1a2e2e" stroke-width="0.12">0</text><line x1="552.5" y1="162" x2="562.5" y2="162" stroke="#1fb9b5" stroke-width="1"/><circle cx="557.5" cy="162" r="2.4" fill="#1fb9b5"/><text x="566" y="164.1" font-size="5.55" fill="#333">交易总额</text></svg><!--/CHART-->
<!-- table card -->
<div class="card" style="left:111px;top:342.9px;width:731.4px;height:160px"></div>
<div class="bar" style="left:120.1px;top:352.1px;height:7px"></div>
<div class="ttl" style="left:127.5px;top:351.5px">实际收益报表</div>

<!--PIE--><svg class="abs" style="left:602px;top:160px" width="240" height="170" viewBox="602 160 240 170" font-family="Liberation Sans, sans-serif"><path d="M722.40 181.20 A49.65 49.65 0 0 1 726.73 181.39 L725.55 194.89 A36.1 36.1 0 0 0 722.40 194.75 Z" fill="#5066ee" stroke="#fff" stroke-width="0.5"/><path d="M726.73 181.39 A49.65 49.65 0 0 1 731.53 182.05 L729.04 195.37 A36.1 36.1 0 0 0 725.55 194.89 Z" fill="#18dfe0" stroke="#fff" stroke-width="0.5"/><path d="M731.53 182.05 A49.65 49.65 0 1 1 722.40 181.20 L722.40 194.75 A36.1 36.1 0 1 0 729.04 195.37 Z" fill="#a98aee" stroke="#fff" stroke-width="0.5"/><text x="722.40" y="237.3" text-anchor="middle" font-size="8.4" fill="#444">102.46</text><rect x="645" y="313" width="4.4" height="4.4" fill="#5066ee"/><text x="652.1" y="317.3" font-size="5.7" letter-spacing="-0.1" fill="#333">微信支付:0.90</text><rect x="696.5" y="313" width="4.4" height="4.4" fill="#18dfe0"/><text x="703.2" y="317.3" font-size="5.7" letter-spacing="-0.1" fill="#333">在线卡支付:0.00</text><rect x="753.5" y="313" width="4.4" height="4.4" fill="#a98aee"/><text x="760.6" y="317.3" font-size="5.7" letter-spacing="-0.1" fill="#333">钱包支付:101.56</text></svg><!--/PIE-->
<!--TABLE--><table><colgroup><col style="width:60.17px"><col style="width:60.17px"><col style="width:60.17px"><col style="width:60.17px"><col style="width:60.17px"><col style="width:60.17px"><col style="width:60.17px"><col style="width:60.17px"><col style="width:60.17px"><col style="width:60.17px"><col style="width:60.17px"><col style="width:60.17px"></colgroup><tr><th>项目名称</th><th>回路名称</th><th>回路编号</th><th>日期</th><th>在线卡支付</th><th>在线卡支付次数</th><th>微信支付</th><th>微信支付次数</th><th>钱包支付</th><th>钱包支付次数</th><th>实际交易金额</th><th>交易次数</th></tr><tr><td class="l">Temporary Po...</td><td class="">1#</td><td class="l">241211001700...</td><td class="l">2026-01-27 0...</td><td class="">0.00</td><td class="">0</td><td class="">0.90</td><td class="">1</td><td class="">0.75</td><td class="">5</td><td class="">1.65</td><td class="">6</td></tr><tr><td class="l">Temporary Po...</td><td class="">1#</td><td class="l">241211001700...</td><td class="l">2026-01-13 13...</td><td class="">0.00</td><td class="">0</td><td class="">0.00</td><td class="">0</td><td class="">0.00</td><td class="">1</td><td class="">0.00</td><td class="">1</td></tr><tr><td class="l">Temporary Po...</td><td class="">aa</td><td class="l">241211001700...</td><td class="l">2026-01-13 12...</td><td class="">0.00</td><td class="">0</td><td class="">0.00</td><td class="">0</td><td class="">0.00</td><td class="">1</td><td class="">0.00</td><td class="">1</td></tr><tr><td class="l">Temporary Po...</td><td class=""></td><td class="l">241211001700...</td><td class="l">2026-01-12 12...</td><td class="">0.00</td><td class="">0</td><td class="">0.00</td><td class="">0</td><td class="">0.00</td><td class="">1</td><td class="">0.00</td><td class="">1</td></tr><tr><td class="l">Temporary Po...</td><td class="">aa</td><td class="l">241211001700...</td><td class="l">2026-01-08 1...</td><td class="">0.00</td><td class="">0</td><td class="">0.00</td><td class="">0</td><td class="">0.00</td><td class="">1</td><td class="">0.00</td><td class="">1</td></tr><tr><td class="l"></td><td class=""></td><td class="l"></td><td class="l"></td><td class=""></td><td class=""></td><td class=""></td><td class=""></td><td class=""></td><td class=""></td><td class=""></td><td class=""></td></tr></table><!--/TABLE-->
<div class="abs" style="left:835px;top:387px;width:3px;height:52.5px;background:#e3e3e3"></div><div class="abs" style="left:835.3px;top:392px;width:5.6px;height:6.6px;background:#fff;border-radius:0.8px"><svg width="5.6" height="6.6" viewBox="0 0 5.6 6.6" style="position:absolute;left:0;top:0"><path d="M1 1.3 H4.2 M1 3.3 H4.6 M1 5.3 H4.6" stroke="#666" stroke-width="0.8"/></svg></div>
<!--WM--><div class="abs" style="left:478px;top:433.6px;width:33px;height:25.6px;opacity:0.9"><svg width="33" height="25.6" viewBox="0 0 32 25"><ellipse cx="11" cy="10" rx="10.5" ry="9" fill="#a8a8a8"/><path d="M4 16 L3 20.5 L8.5 17.5 Z" fill="#a8a8a8"/><circle cx="7.5" cy="7" r="1.4" fill="#fff"/><circle cx="14.5" cy="7" r="1.4" fill="#fff"/><ellipse cx="21.5" cy="15.5" rx="9.8" ry="8.3" fill="#fff"/><ellipse cx="21.5" cy="15.5" rx="8.6" ry="7.3" fill="#a8a8a8"/><path d="M27.5 20.5 L29 24.5 L24.5 22 Z" fill="#a8a8a8"/><circle cx="18.5" cy="13.5" r="1.2" fill="#fff"/><circle cx="24.5" cy="13.5" r="1.2" fill="#fff"/></svg></div>
<div id="wm1" class="abs" style="left:516px;top:432.4px;font-size:22.6px;line-height:32px;color:rgba(125,125,125,0.6);white-space:nowrap;-webkit-text-stroke-width:0.2px">公众号</div>
<div id="wm2" class="abs" style="left:592.5px;top:432.4px;font-size:22.6px;line-height:32px;color:rgba(125,125,125,0.6);white-space:nowrap;-webkit-text-stroke-width:0">·</div>
<div id="wm3" class="abs" style="left:609px;top:432.3px;font-size:23.8px;line-height:32px;color:rgba(125,125,125,0.6);white-space:nowrap;-webkit-text-stroke-width:0.2px">光储充新能源事业部</div><!--/WM-->
</body></html>
